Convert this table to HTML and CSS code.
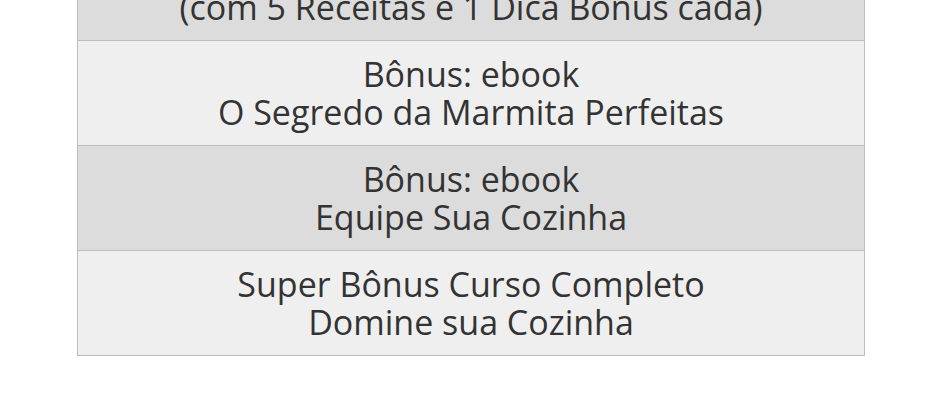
FILE: index.html
```html
<!DOCTYPE html>
<html lang="pt-BR">
<head>
    <meta charset="UTF-8">
    <meta name="viewport" content="width=device-width, initial-scale=1.0">
    <title>Bônus</title>
    <link rel="stylesheet" href="styles.css">
</head>
<body>
    <div class="bonus-list">
        <div class="bonus-row dark">
            Receitas Fit Semanais<br>
            (com 5 Receitas e 1 Dica Bônus cada)
        </div>
        <div class="bonus-row">
            Bônus: ebook<br>
            O Segredo da Marmita Perfeitas
        </div>
        <div class="bonus-row dark">
            Bônus: ebook<br>
            Equipe Sua Cozinha
        </div>
        <div class="bonus-row">
            Super Bônus Curso Completo<br>
            Domine sua Cozinha
        </div>
    </div>
</body>
</html>
```

FILE: styles.css
```css
body {
    margin: 0;
    background: #fff;
    font-family: "Open Sans", "Liberation Sans", sans-serif;
    color: #333;
}
.bonus-list {
    width: 786px;
    margin: -65px 0 0 77px;
    border-left: 1px solid #bdbdbd;
    border-right: 1px solid #bdbdbd;
    border-bottom: 1px solid #bdbdbd;
}
.bonus-row {
    background-color: #efefef;
    text-align: center;
    font-size: 34px;
    line-height: 38px;
    padding: 14px 10px;
    border-top: 1px solid #bdbdbd;
}
.bonus-row.dark {
    background-color: #dcdcdc;
}
```
